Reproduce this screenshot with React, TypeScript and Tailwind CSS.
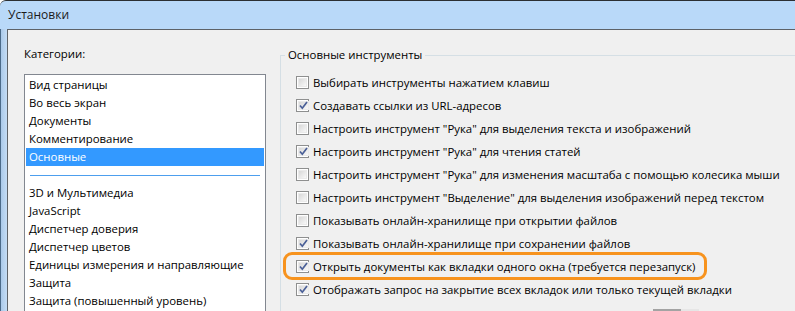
import React from 'react';

const font = { fontFamily: '"Open Sans", "Noto Sans", sans-serif' };

const categories = [
  'Вид страницы',
  'Во весь экран',
  'Документы',
  'Комментирование',
  'Основные',
  '---',
  '3D и Мультимедиа',
  'JavaScript',
  'Диспетчер доверия',
  'Диспетчер цветов',
  'Единицы измерения и направляющие',
  'Защита',
  'Защита (повышенный уровень)',
];

const options: { label: string; checked: boolean; marked?: boolean }[] = [
  { label: 'Выбирать инструменты нажатием клавиш', checked: false },
  { label: 'Создавать ссылки из URL-адресов', checked: true },
  { label: 'Настроить инструмент "Рука" для выделения текста и изображений', checked: false },
  { label: 'Настроить инструмент "Рука" для чтения статей', checked: true },
  { label: 'Настроить инструмент "Рука" для изменения масштаба с помощью колесика мыши', checked: false },
  { label: 'Настроить инструмент "Выделение" для выделения изображений перед текстом', checked: false },
  { label: 'Показывать онлайн-хранилище при открытии файлов', checked: false },
  { label: 'Показывать онлайн-хранилище при сохранении файлов', checked: true },
  { label: 'Открыть документы как вкладки одного окна (требуется перезапуск)', checked: true, marked: true },
  { label: 'Отображать запрос на закрытие всех вкладок или только текущей вкладки', checked: true },
];

const Checkbox: React.FC<{ checked: boolean }> = ({ checked }) => (
  <span className="w-[13px] h-[13px] shrink-0 border border-[#8e8f8f] bg-white p-px flex">
    <span className="flex-1 bg-gradient-to-br from-[#d8d8d8] to-[#f8f8f8] border border-[#eaeaea] flex items-center justify-center">
      {checked && (
        <svg width="9" height="9" viewBox="0 0 9 9">
          <path d="M1 4.5 L3.3 7.2 L8 1" fill="none" stroke="#4a5f97" strokeWidth="1.7" />
        </svg>
      )}
    </span>
  </span>
);

export default function App() {
  return (
    <div className="w-[795px] h-[311px] overflow-hidden bg-[#b9d9f9] flex flex-col border-t border-[#2b2f33] rounded-tl-[6px] text-[11.4px] text-black" style={font}>
      <div className="h-[28px] shrink-0 flex items-center pl-[8px] text-[12px] text-[#1a1a1a]">Установки</div>
      <div className="flex-1 flex min-h-0">
        <div className="w-[7px] shrink-0 bg-gradient-to-r from-[#a9c9ea] to-[#c4dcf5] border-l border-[#4a6a8a]" />
        <div className="flex-1 bg-[#f0f0f0] border-l border-t border-[#5d6268] flex min-w-0">
          <div className="w-[258px] shrink-0 pl-[16px] pt-[15px]">
            <div className="h-[18px] flex items-center">Категории:</div>
            <div className="mt-[11px] w-[242px] bg-white border border-[#828790] p-px">
              {categories.map((c) =>
                c === '---' ? (
                  <div key={c} className="h-[18px] flex items-center px-[4px]">
                    <div className="h-px w-full bg-[#4d9fee]" />
                  </div>
                ) : (
                  <div
                    key={c}
                    className={`h-[18px] flex items-center pl-[3px] whitespace-nowrap ${c === 'Основные' ? 'bg-[#3399ff] text-white' : ''}`}
                  >
                    {c}
                  </div>
                ),
              )}
            </div>
          </div>
          <div className="flex-1 min-w-0 pl-[14px] pt-[17px]">
            <fieldset className="border-t border-l border-[#d5dfe5] h-full">
              <legend className="ml-[4px] px-[3px] leading-[16px]">Основные инструменты</legend>
              <div className="flex flex-col pt-[8px] pl-[15px]">
                {options.map((o) => (
                  <div key={o.label} className="relative h-[23px] flex items-center gap-[4px] whitespace-nowrap">
                    {o.marked && (
                      <span className="absolute left-[-13px] w-[424px] top-[-3px] bottom-[-2px] border-[3px] border-[#f7931e] rounded-[9px]" />
                    )}
                    <Checkbox checked={o.checked} />
                    <span>{o.label}</span>
                  </div>
                ))}
                <div className="ml-[357px] mt-[8px] flex">
                  <span className="w-[28px] h-[3px] bg-[#a3a3a3]" />
                  <span className="w-[18px] h-[3px] bg-[#e6e6e6]" />
                </div>
              </div>
            </fieldset>
          </div>
        </div>
      </div>
    </div>
  );
}
